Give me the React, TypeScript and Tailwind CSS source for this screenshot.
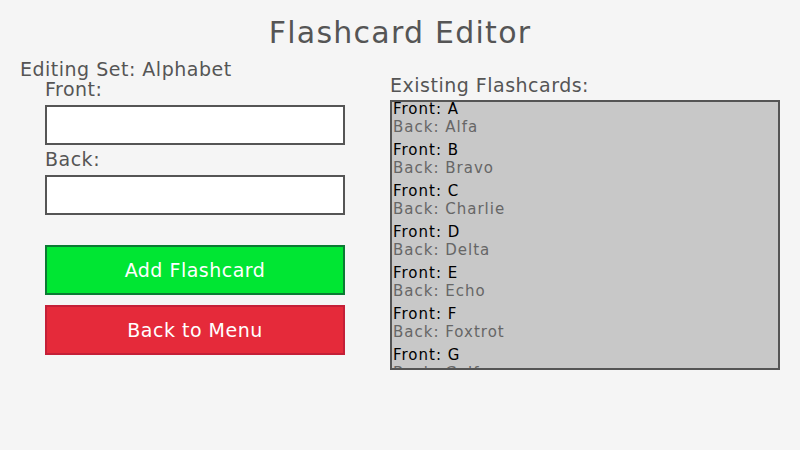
const cards = [
  { front: "A", back: "Alfa" },
  { front: "B", back: "Bravo" },
  { front: "C", back: "Charlie" },
  { front: "D", back: "Delta" },
  { front: "E", back: "Echo" },
  { front: "F", back: "Foxtrot" },
  { front: "G", back: "Golf" },
];

export default function App() {
  return (
    <div className="h-[450px] w-[800px] overflow-hidden bg-[#f5f5f5] font-['DejaVu_Sans',sans-serif] text-[#555555]">
      <h1 className="pt-[15px] text-center text-[30px] leading-[36px] tracking-[1.25px]">
        Flashcard Editor
      </h1>

      <div className="mt-[8px] flex">
        <div className="w-[390px] pl-[20px] text-[19px] leading-[20px] tracking-[0.5px]">
          <div>Editing Set: Alphabet</div>
          <div className="pl-[25px]">
            <div>Front:</div>
            <input className="mt-[6px] block h-[40px] w-[300px] border-2 border-[#555555] bg-white outline-none" />
            <div className="mt-[4px]">Back:</div>
            <input className="mt-[6px] block h-[40px] w-[300px] border-2 border-[#555555] bg-white outline-none" />
            <button className="mt-[30px] flex h-[50px] w-[300px] items-center justify-center border-2 border-[#0b7a33] bg-[#00e633] text-white">
              Add Flashcard
            </button>
            <button className="mt-[10px] flex h-[50px] w-[300px] items-center justify-center border-2 border-[#c41f37] bg-[#e52a3a] text-white">
              Back to Menu
            </button>
          </div>
        </div>

        <div className="pt-[16px]">
          <div className="text-[19px] leading-[20px] tracking-[0.5px]">
            Existing Flashcards:
          </div>
          <div className="mt-[5px] h-[270px] w-[390px] overflow-hidden border-2 border-[#555555] bg-[#c8c8c8] pl-[1px]">
            <div className="-mt-[2px] text-[15px] leading-[18px] tracking-[1px]">
              {cards.map((card) => (
                <div key={card.front} className="mb-[5px]">
                  <div className="text-black">Front: {card.front}</div>
                  <div className="text-[#666666]">Back: {card.back}</div>
                </div>
              ))}
            </div>
          </div>
        </div>
      </div>
    </div>
  );
}
